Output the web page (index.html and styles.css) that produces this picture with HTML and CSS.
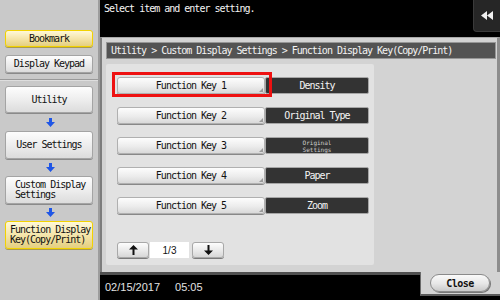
FILE: index.html
```html
<!DOCTYPE html>
<html>
<head>
<meta charset="utf-8">
<link rel="stylesheet" href="styles.css">
</head>
<body>
<div class="screen">
  <aside class="side">
    <div class="side-top">
      <div class="sbtn yellow bm">Bookmark</div>
      <div class="sbtn dk">Display Keypad</div>
    </div>
    <div class="side-nav">
      <div class="sbtn nav">Utility</div>
      <div class="arrow a1"><svg width="9" height="9" viewBox="0 0 9 9"><path d="M3 0h3v4h3l-4.5 5L0 4h3z" fill="#1f56e6"/></svg></div>
      <div class="sbtn nav">User Settings</div>
      <div class="arrow"><svg width="9" height="9" viewBox="0 0 9 9"><path d="M3 0h3v4h3l-4.5 5L0 4h3z" fill="#1f56e6"/></svg></div>
      <div class="sbtn nav two">Custom Display<br>Settings</div>
      <div class="arrow"><svg width="9" height="9" viewBox="0 0 9 9"><path d="M3 0h3v4h3l-4.5 5L0 4h3z" fill="#1f56e6"/></svg></div>
      <div class="sbtn nav two yellow fdk">Function Display<br>Key(Copy/Print)</div>
    </div>
  </aside>
  <main class="main">
    <div class="topbar">
      <span class="msg">Select item and enter setting.</span>
      <div class="back"><svg width="12" height="9" viewBox="0 0 12 9"><path d="M0 4.5L6 0v9zM6 4.5L12 0v9z" fill="#f0f0f0"/></svg></div>
    </div>
    <section class="panel">
      <div class="crumb">Utility &gt; Custom Display Settings &gt; Function Display Key(Copy/Print)</div>
      <div class="list">
        <div class="row"><div class="fk">Function Key 1</div><div class="val">Density</div><span class="redbox"></span></div>
        <div class="row"><div class="fk">Function Key 2</div><div class="val">Original Type</div></div>
        <div class="row"><div class="fk">Function Key 3</div><div class="val tiny">Original<br>Settings</div></div>
        <div class="row"><div class="fk">Function Key 4</div><div class="val">Paper</div></div>
        <div class="row"><div class="fk">Function Key 5</div><div class="val">Zoom</div></div>
        <div class="pager">
          <div class="pbtn"><svg width="9" height="10" viewBox="0 0 9 10"><path d="M4.5 0L9 4.5H5.5V10h-2V4.5H0z" fill="#111"/></svg></div>
          <div class="pnum">1/3</div>
          <div class="pbtn down"><svg width="9" height="10" viewBox="0 0 9 10"><path d="M4.5 10L9 5.5H5.5V0h-2v5.5H0z" fill="#111"/></svg></div>
        </div>
      </div>
    </section>
    <div class="bottom">
      <div class="status"><span class="date">02/15/2017</span><span class="time">05:05</span></div>
      <div class="closetab"><div class="close">Close</div></div>
    </div>
  </main>
</div>
</body>
</html>
```
FILE: styles.css
```css
* { box-sizing: border-box; }
html, body { margin: 0; padding: 0; }
body { width: 500px; height: 300px; overflow: hidden; background: #000; }

.screen {
  display: flex;
  width: 500px;
  height: 300px;
  font-family: "DejaVu Sans Mono", monospace;
  font-size: 10px;
  letter-spacing: -1px;
  color: #111;
}

/* sidebar */
.side {
  width: 100px;
  height: 300px;
  background: #c9c9c9;
  border-right: 2px solid #9c9c9c;
  display: flex;
  flex-direction: column;
}
.side-top {
  height: 80px;
  padding-top: 30px;
  border-bottom: 1px solid #9a9a9a;
}
.sbtn {
  margin-left: 5px;
  width: 88px;
  border: 1px solid #a4a4a4;
  border-radius: 3px;
  background: linear-gradient(#fdfdfd, #ececec 55%, #dcdcdc);
  box-shadow: 0 1px 0 #8a8a8a;
  display: flex;
  align-items: center;
  justify-content: center;
  line-height: 10px;
}
.sbtn.yellow {
  border: 1px solid #f2d200;
  background: linear-gradient(#fff8d8, #f3e3a6 55%, #e4cf80);
  box-shadow: 0 1px 0 #a89a50;
}
.bm { height: 17px; margin-bottom: 8px; }
.dk { height: 18px; }
.side-nav { padding-top: 5px; border-top: 1px solid #dedede; }
.nav { height: 27px; }
.nav.two { height: 28px; justify-content: flex-start; padding-left: 9px; }
.nav.fdk { padding-left: 4px; }
.arrow {
  height: 17px;
  display: flex;
  align-items: center;
  justify-content: center;
  padding-left: 2px;
}
.arrow.a1 { height: 18px; }
.side-nav > .sbtn:nth-child(3) { height: 28px; }

/* main */
.main {
  width: 400px;
  height: 300px;
  display: flex;
  flex-direction: column;
  background: #000;
}
.topbar {
  height: 37px;
  display: flex;
  justify-content: space-between;
  align-items: flex-start;
}
.msg {
  color: #f4f4f4;
  padding: 4px 0 0 4px;
  line-height: 10px;
}
.back {
  width: 27px;
  height: 32px;
  background: #262626;
  border-radius: 0 0 0 4px;
  border-left: 1px solid #3a3a3a;
  border-bottom: 1px solid #3a3a3a;
  display: flex;
  align-items: center;
  justify-content: center;
}

.panel {
  height: 235px;
  background: #d3d3d3;
  border-top: 1px solid #a9a9a9;
  border-left: 2px solid #7d7d7d;
  border-right: 3px solid #8d8d8d;
  padding: 4px 1px 0 4px;
}
.crumb {
  height: 17px;
  background: #535353;
  border: 1px solid #969696;
  color: #f4f4f4;
  line-height: 15px;
  padding-left: 4px;
  white-space: nowrap;
}
.list {
  margin-top: 5px;
  width: 268px;
  height: 201px;
  background: #e2e2e2;
  border-radius: 2px;
  padding: 13px 0 0 11px;
  display: flex;
  flex-direction: column;
  gap: 13px;
}
.row {
  position: relative;
  display: flex;
  height: 17px;
}
.fk {
  position: relative;
  width: 148px;
  height: 17px;
  border: 1px solid #b0b0b0;
  border-radius: 3px;
  background: linear-gradient(#fdfdfd, #ececec 55%, #d9d9d9);
  box-shadow: 0 1px 0 #888;
  display: flex;
  align-items: center;
  justify-content: center;
}
.fk::after {
  content: "";
  position: absolute;
  right: 1px;
  bottom: 1px;
  border-style: solid;
  border-width: 0 0 4px 4px;
  border-color: transparent transparent #9a9a9a transparent;
}
.val {
  width: 104px;
  height: 17px;
  background: #333;
  border: 1px solid #a6a6a6;
  border-radius: 2px;
  color: #f4f4f4;
  display: flex;
  align-items: center;
  justify-content: center;
}
.val.tiny {
  font-size: 6px;
  letter-spacing: 0;
  line-height: 7px;
  text-align: center;
  color: #cfcfcf;
}
.redbox {
  position: absolute;
  left: -5px;
  top: -5px;
  width: 160px;
  height: 25px;
  border: 3px solid #ee1111;
}
.pager {
  margin-top: 15px;
  display: flex;
  height: 16px;
}
.pbtn {
  width: 32px;
  height: 16px;
  border: 1px solid #a8a8a8;
  border-radius: 3px;
  background: linear-gradient(#fdfdfd, #e9e9e9 55%, #d7d7d7);
  box-shadow: 0 1px 0 #7a7a7a;
  display: flex;
  align-items: center;
  justify-content: center;
}
.pbtn.down { margin-left: 3px; }
.pnum {
  width: 39px;
  margin-left: 1px;
  background: #fff;
  font-family: "Liberation Sans", Arial, sans-serif;
  letter-spacing: 0;
  font-size: 10px;
  display: flex;
  align-items: center;
  justify-content: center;
}

.bottom {
  height: 28px;
  display: flex;
}
.status {
  width: 320px;
  border-top: 3px solid #505050;
  background: #000;
  color: #e2e2e2;
  font-family: "Liberation Sans", Arial, sans-serif;
  font-size: 11px;
  letter-spacing: 0;
  padding: 6px 0 0 5px;
  display: flex;
  gap: 15px;
}
.closetab {
  width: 80px;
  height: 24px;
  background: #d3d3d3;
  border-left: 1px solid #6a6a6a;
  border-bottom: 2px solid #5a5a5a;
  padding: 2px 0 0 9px;
}
.close {
  width: 60px;
  height: 18px;
  border: 1px solid #8a8a8a;
  border-radius: 9px;
  background: linear-gradient(#fafafa, #e6e6e6 55%, #c9c9c9);
  box-shadow: 1px 1px 0 #777;
  display: flex;
  align-items: center;
  justify-content: center;
  font-weight: bold;
  letter-spacing: -0.5px;
}
```
